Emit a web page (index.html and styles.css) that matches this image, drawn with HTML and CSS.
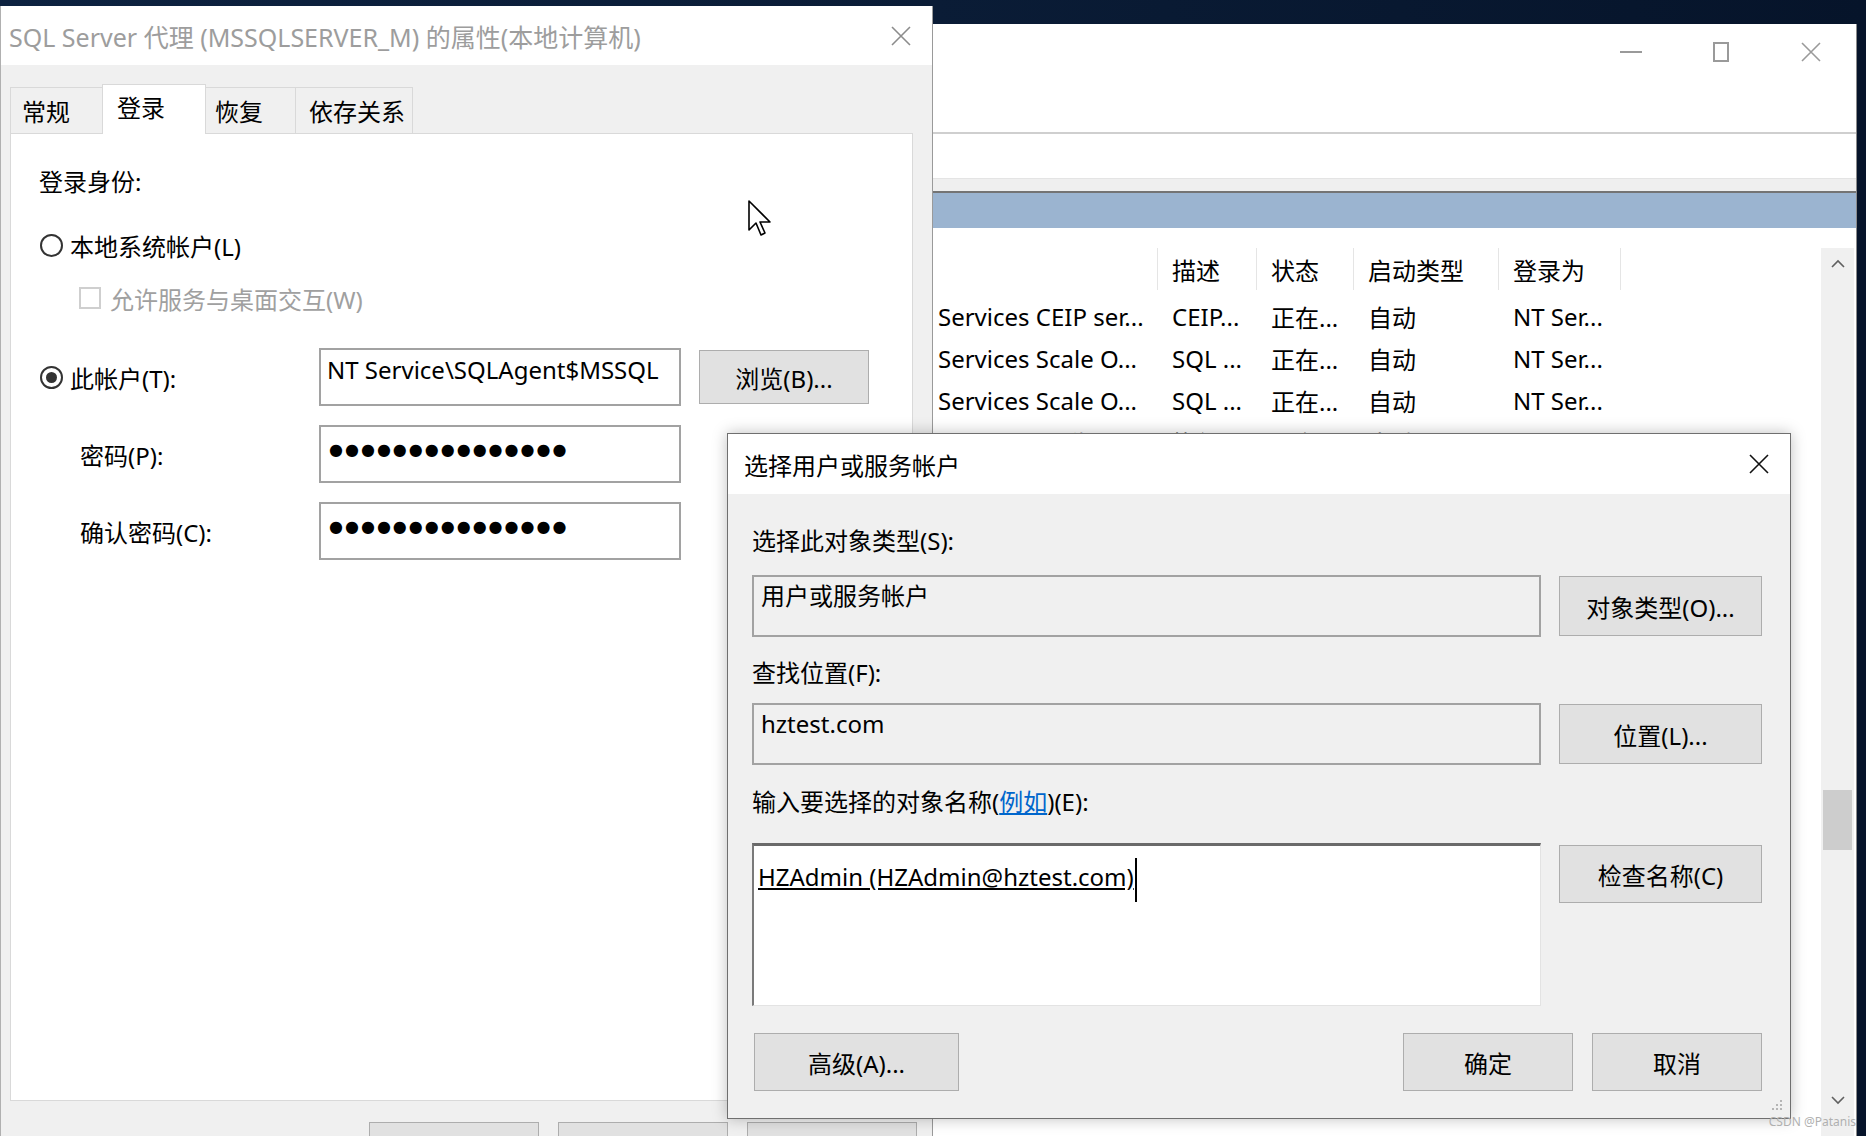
FILE: index.html
```html
<!DOCTYPE html>
<html lang="zh-CN">
<head>
  <meta charset="UTF-8" />
  <title>SQL Server 代理 (MSSQLSERVER_M) 的属性</title>
  <link rel="stylesheet" href="styles.css">
</head>
<body>
<div class="desktop">

  <!-- services console in the background -->
  <div class="win services">
    <div class="svc-title">
      <span class="ctl ctl-min"></span>
      <span class="ctl ctl-max"></span>
      <svg class="ctl ctl-close" width="22" height="22" viewBox="0 0 22 22"><path d="M2 2 L20 20 M20 2 L2 20" stroke="#9a9a9a" stroke-width="1.6" fill="none"/></svg>
    </div>
    <div class="svc-toolbar"></div>
    <div class="svc-strip"></div>
    <div class="svc-band"></div>
    <div class="svc-list-area">
      <div class="svc-list">
        <div class="svc-row svc-head">
          <div class="cell name"></div>
          <div class="cell">描述</div>
          <div class="cell">状态</div>
          <div class="cell">启动类型</div>
          <div class="cell">登录为</div>
        </div>
        <div class="svc-row">
          <div class="cell name">Services CEIP ser...</div>
          <div class="cell">CEIP...</div>
          <div class="cell">正在...</div>
          <div class="cell">自动</div>
          <div class="cell">NT Ser...</div>
        </div>
        <div class="svc-row">
          <div class="cell name">Services Scale O...</div>
          <div class="cell">SQL ...</div>
          <div class="cell">正在...</div>
          <div class="cell">自动</div>
          <div class="cell">NT Ser...</div>
        </div>
        <div class="svc-row">
          <div class="cell name">Services Scale O...</div>
          <div class="cell">SQL ...</div>
          <div class="cell">正在...</div>
          <div class="cell">自动</div>
          <div class="cell">NT Ser...</div>
        </div>
        <div class="svc-row">
          <div class="cell name">SQL Server 代理...</div>
          <div class="cell">执行...</div>
          <div class="cell">正在...</div>
          <div class="cell">自动</div>
          <div class="cell">NT Ser...</div>
        </div>
      </div>
      <div class="vscroll">
        <svg width="16" height="12" viewBox="0 0 16 12"><path d="M2 9 L8 3 L14 9" stroke="#606060" stroke-width="1.6" fill="none"/></svg>
        <div class="vtrack"><div class="vthumb"></div></div>
        <svg width="16" height="12" viewBox="0 0 16 12"><path d="M2 3 L8 9 L14 3" stroke="#606060" stroke-width="1.6" fill="none"/></svg>
      </div>
    </div>
  </div>

  <!-- properties dialog -->
  <div class="win props">
    <div class="props-title">
      <span>SQL Server 代理 (MSSQLSERVER_M) 的属性(本地计算机)</span>
      <svg width="22" height="22" viewBox="0 0 22 22"><path d="M2 2 L20 20 M20 2 L2 20" stroke="#8c8c8c" stroke-width="1.6" fill="none"/></svg>
    </div>
    <div class="tabs">
      <div class="tab">常规</div>
      <div class="tab active">登录</div>
      <div class="tab">恢复</div>
      <div class="tab">依存关系</div>
    </div>
    <div class="tab-panel">
      <div class="p-label">登录身份:</div>
      <div class="radio-row">
        <span class="radio"></span>
        <span>本地系统帐户(L)</span>
      </div>
      <div class="check-row">
        <span class="check"></span>
        <span>允许服务与桌面交互(W)</span>
      </div>
      <div class="acct-grid">
        <div class="radio-row tight">
          <span class="radio on"></span>
          <span>此帐户(T):</span>
        </div>
        <div class="field">NT Service\SQLAgent$MSSQL</div>
        <div class="btn browse">浏览(B)...</div>

        <div class="sub-label">密码(P):</div>
        <div class="field dots">●●●●●●●●●●●●●●●</div>
        <div></div>

        <div class="sub-label">确认密码(C):</div>
        <div class="field dots">●●●●●●●●●●●●●●●</div>
        <div></div>
      </div>
    </div>
    <div class="props-buttons">
      <div class="btn"></div>
      <div class="btn"></div>
      <div class="btn"></div>
    </div>
  </div>

  <svg class="cursor" width="26" height="40" viewBox="0 0 26 40">
    <path d="M2 2 L2 31 L9 24 L14 36 L18 34 L13 23 L23 23 Z" fill="#fff" stroke="#000" stroke-width="1.6" stroke-linejoin="round"/>
  </svg>

  <!-- select user dialog -->
  <div class="win picker">
    <div class="picker-title">
      <span>选择用户或服务帐户</span>
      <svg width="22" height="22" viewBox="0 0 22 22"><path d="M2 2 L20 20 M20 2 L2 20" stroke="#111" stroke-width="1.6" fill="none"/></svg>
    </div>
    <div class="picker-body">
      <div class="pk-label">选择此对象类型(S):</div>
      <div class="pk-box">用户或服务帐户</div>
      <div class="btn pk-btn">对象类型(O)...</div>

      <div class="pk-label second">查找位置(F):</div>
      <div class="pk-box">hztest.com</div>
      <div class="btn pk-btn">位置(L)...</div>

      <div class="pk-label third">输入要选择的对象名称(<a class="link">例如</a>)(E):</div>
      <div class="pk-names"><span class="resolved">HZAdmin (HZAdmin@hztest.com)</span><span class="caret"></span></div>
      <div class="btn pk-btn top">检查名称(C)</div>

      <div class="pk-footer">
        <div class="btn advanced">高级(A)...</div>
        <div class="spacer"></div>
        <div class="btn small">确定</div>
        <div class="btn small">取消</div>
      </div>
    </div>
    <svg class="grip" width="14" height="14" viewBox="0 0 14 14" fill="#b5b5b5">
      <rect x="10" y="2" width="2" height="2"/>
      <rect x="6" y="6" width="2" height="2"/><rect x="10" y="6" width="2" height="2"/>
      <rect x="2" y="10" width="2" height="2"/><rect x="6" y="10" width="2" height="2"/><rect x="10" y="10" width="2" height="2"/>
    </svg>
  </div>

  <div class="watermark">CSDN @Patanis</div>
</div>
</body>
</html>
```

FILE: styles.css
```css
* {
  box-sizing: border-box;
}

body {
  margin: 0;
  font-family: "Noto Sans", "Noto Sans CJK SC", sans-serif;
  font-size: 24px;
  color: #000;
  background: #0b1a30;
}

.desktop {
  position: relative;
  width: 1866px;
  height: 1136px;
  overflow: hidden;
  background: linear-gradient(90deg, #0d2240 0%, #0a1c36 50%, #06142a 100%);
}

.win {
  position: absolute;
}

.btn {
  display: flex;
  align-items: center;
  justify-content: center;
  background: #e1e1e1;
  border: 1px solid #adadad;
  white-space: nowrap;
}

/* services console */
.services {
  left: 932px;
  top: 24px;
  width: 925px;
  height: 1120px;
  background: #fff;
  border-right: 1px solid #8a8a8a;
  display: flex;
  flex-direction: column;
}

.svc-title {
  height: 110px;
  display: flex;
  justify-content: flex-end;
  align-items: flex-start;
  padding-top: 17px;
  padding-right: 34px;
  gap: 71px;
  border-bottom: 2px solid #cfcfcf;
}

.ctl-min {
  width: 22px;
  height: 2px;
  margin-top: 10px;
  background: #9a9a9a;
}

.ctl-max {
  width: 16px;
  height: 20px;
  border: 2px solid #9a9a9a;
  margin-top: 1px;
}

.svc-toolbar {
  height: 44px;
}

.svc-strip {
  height: 15px;
  background: #efefef;
  border-top: 1px solid #e4e4e4;
  border-bottom: 2px solid #747474;
}

.svc-band {
  height: 35px;
  background: #9bb4d0;
}

.svc-list-area {
  flex: 1;
  display: flex;
}

.svc-list {
  flex: 1;
  padding-top: 20px;
}

.svc-row {
  display: grid;
  grid-template-columns: 226px 99px 97px 145px 122px;
  height: 42px;
  align-items: center;
  white-space: nowrap;
}

.svc-row .cell {
  padding-left: 14px;
  overflow: hidden;
}

.svc-row .cell.name {
  padding-left: 6px;
}

.svc-head {
  align-items: stretch;
  margin-bottom: 5px;
}

.svc-head .cell {
  display: flex;
  align-items: center;
  border-right: 1px solid #e5e5e5;
}

.vscroll {
  width: 33px;
  margin-top: 20px;
  margin-right: 2px;
  background: #f0f0f0;
  display: flex;
  flex-direction: column;
  align-items: center;
  padding: 10px 0 38px;
}

.vtrack {
  flex: 1;
  width: 100%;
  padding-top: 520px;
}

.vthumb {
  height: 60px;
  margin: 0 2px;
  background: #cdcdcd;
}

/* properties dialog */
.props {
  left: 0;
  top: 6px;
  width: 933px;
  height: 1140px;
  background: #f0f0f0;
  border-right: 1px solid #9a9a9a;
  border-left: 1px solid #b0b0b0;
}

.props-title {
  height: 59px;
  background: #fff;
  display: flex;
  align-items: center;
  justify-content: space-between;
  padding: 0 20px 0 8px;
  font-size: 25px;
  color: #9d9d9d;
}

.tabs {
  display: flex;
  align-items: flex-end;
  margin-top: 22px;
  padding-left: 9px;
  height: 46px;
}

.tab {
  height: 46px;
  display: flex;
  align-items: center;
  padding-left: 11px;
  border: 1px solid #d9d9d9;
  border-bottom: none;
  margin-right: -1px;
}

.tab:nth-child(1) { width: 93px; }
.tab:nth-child(3) { width: 91px; padding-left: 9px; }
.tab:nth-child(4) { width: 118px; padding-left: 13px; }

.tab.active {
  width: 104px;
  height: 50px;
  padding-left: 14px;
  padding-bottom: 6px;
  background: #fff;
  position: relative;
  z-index: 1;
  margin-bottom: -1px;
}

.tab-panel {
  margin: 0 19px 0 9px;
  height: 968px;
  background: #fff;
  border: 1px solid #d9d9d9;
  padding: 33px 0 0 28px;
}

.p-label {
  line-height: 30px;
}

.radio-row {
  display: flex;
  align-items: center;
  gap: 7px;
  height: 30px;
  margin-top: 33px;
  padding-left: 1px;
}

.radio-row.tight {
  margin-top: 0;
  height: auto;
}

.radio {
  width: 23px;
  height: 23px;
  border: 2px solid #333;
  border-radius: 50%;
  background: #fff;
  position: relative;
}

.radio.on::after {
  content: "";
  position: absolute;
  left: 4px;
  top: 4px;
  width: 11px;
  height: 11px;
  border-radius: 50%;
  background: #333;
}

.check-row {
  display: flex;
  align-items: center;
  gap: 9px;
  height: 30px;
  margin-top: 23px;
  padding-left: 40px;
  color: #a0a0a0;
}

.check {
  width: 22px;
  height: 22px;
  border: 2px solid #cfcfcf;
}

.acct-grid {
  display: grid;
  grid-template-columns: 280px 362px auto;
  grid-auto-rows: 58px;
  row-gap: 19px;
  margin-top: 35px;
  align-items: center;
}

.field {
  height: 58px;
  border: 2px solid #a2a2a2;
  padding: 5px 6px;
  line-height: 30px;
  white-space: nowrap;
  overflow: hidden;
}

.field.dots {
  font-family: "DejaVu Sans", sans-serif;
  font-size: 16px;
  letter-spacing: 2px;
  padding: 8px 8px;
}

.sub-label {
  padding-left: 41px;
}

.browse {
  width: 170px;
  height: 54px;
  margin-left: 18px;
}

.props-buttons {
  display: flex;
  justify-content: flex-end;
  gap: 19px;
  margin-top: 21px;
  padding-right: 15px;
}

.props-buttons .btn {
  width: 170px;
  height: 58px;
}

.cursor {
  position: absolute;
  left: 747px;
  top: 199px;
}

/* select user dialog */
.picker {
  left: 727px;
  top: 433px;
  width: 1064px;
  height: 686px;
  background: #f0f0f0;
  border: 1px solid #6f6f6f;
  box-shadow: 0 0 14px rgba(0, 0, 0, 0.25);
}

.picker-title {
  height: 60px;
  background: #fff;
  display: flex;
  align-items: center;
  justify-content: space-between;
  padding: 0 20px 0 16px;
}

.picker-body {
  display: grid;
  grid-template-columns: 789px 203px;
  column-gap: 18px;
  padding: 32px 28px 0 24px;
  align-items: center;
}

.pk-label {
  grid-column: 1 / -1;
  line-height: 30px;
  margin-bottom: 19px;
}

.pk-label.second {
  margin-top: 21px;
  margin-bottom: 15px;
}

.pk-label.third {
  margin-top: 22px;
  margin-bottom: 26px;
}

.link {
  color: #0066cc;
  text-decoration: underline;
}

.pk-box {
  height: 62px;
  border: 2px solid #a2a2a2;
  padding: 4px 7px;
  line-height: 30px;
}

.pk-btn {
  height: 60px;
}

.pk-btn.top {
  align-self: start;
  margin-top: 2px;
  height: 58px;
}

.pk-names {
  height: 163px;
  background: #fff;
  border-top: 3px solid #6a6a6a;
  border-left: 2px solid #7a7a7a;
  border-right: 1px solid #e3e3e3;
  border-bottom: 1px solid #e3e3e3;
  padding: 16px 4px;
  line-height: 30px;
  display: flex;
  align-items: flex-start;
}

.resolved {
  text-decoration: underline;
}

.caret {
  width: 2px;
  height: 44px;
  margin-top: -4px;
  margin-left: 1px;
  background: #000;
}

.pk-footer {
  grid-column: 1 / -1;
  display: flex;
  gap: 19px;
  margin-top: 27px;
}

.pk-footer .btn {
  height: 58px;
}

.advanced {
  width: 205px;
  margin-left: 2px;
}

.spacer {
  flex: 1;
}

.pk-footer .small {
  width: 170px;
}

.grip {
  position: absolute;
  right: 6px;
  bottom: 6px;
}

.watermark {
  position: absolute;
  right: 10px;
  bottom: 6px;
  font-size: 12px;
  color: #b0b0b0;
}
```
